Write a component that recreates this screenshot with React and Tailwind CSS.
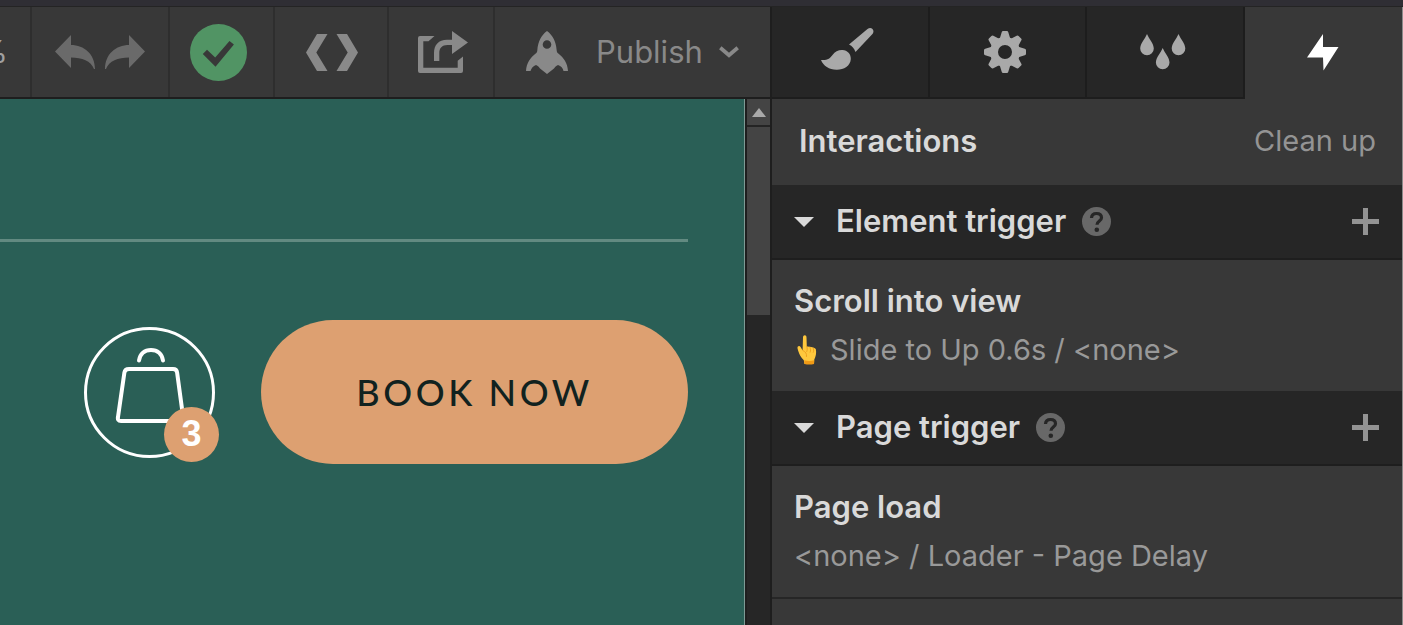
import React from "react";

const GEAR_ANGLES = [0, 45, 90, 135, 180, 225, 270, 315];

function UndoIcon({ className }) {
  return (
    <svg className={className} width="40" height="34" viewBox="0 0 40 34" fill="currentColor" aria-hidden="true">
      <path d="M0 16.500 16 0v10c13 0 24 9 24 24h-1c-3-8-12-11.500-23-11.500V33Z" />
    </svg>
  );
}

function CheckIcon() {
  return (
    <svg width="57" height="57" viewBox="0 0 57 57" aria-hidden="true">
      <circle cx="28.500" cy="28.500" r="28.500" fill="#519464" />
      <path d="m12.800 30 4.200-4.300 8.200 7.800L39.500 17l4.400 3.600L25.500 42.800Z" fill="#383838" />
    </svg>
  );
}

function CodeIcon() {
  return (
    <svg width="52" height="37" viewBox="0 0 52 37" fill="currentColor" aria-hidden="true">
      <path d="M11 0h10.500L10.300 18.500 21.500 37H11L0 18.500Z" />
      <path d="M41 0H30.500l11.200 18.500L30.500 37H41l11-18.500Z" />
    </svg>
  );
}

function ShareIcon() {
  return (
    <svg width="50" height="42" viewBox="0 0 50 42" fill="currentColor" aria-hidden="true">
      <path d="M2 5h14.500l-6 5.300H5.300v26.400h34.400v-7L45 25.500V40a2 2 0 0 1-2 2H2a2 2 0 0 1-2-2V7a2 2 0 0 1 2-2Z" />
      <path d="M34 0l16 11.500L34 23v-9h-4.500c-5.500 0-8.200 3-8.200 8v8H16v-8c0-8 4.500-13.300 13-13.300h5Z" />
    </svg>
  );
}

function RocketIcon() {
  return (
    <svg width="42" height="43" viewBox="0 0 42 43" fill="currentColor" aria-hidden="true">
      <path
        fillRule="evenodd"
        d="M21 0c5.500 4 9 10 9.700 19.500.1 1.300.6 2.200 1.600 3C38 27 41.500 32 42 40h-4.500c-.5-3-2.500-5-5.500-6-2 1-3 2-4 3.500L21 43l-7-5.500c-1-1.500-2-2.500-4-3.500-3 1-4.500 3-5.500 6H0c.5-8 4-13 9.700-17.500 1-.8 1.500-1.700 1.600-3C12 10 15.500 4 21 0Zm0 9.200a4.300 4.300 0 1 0 0 8.600 4.300 4.300 0 0 0 0-8.600Z"
      />
    </svg>
  );
}

function ChevronIcon() {
  return (
    <svg width="20" height="12" viewBox="0 0 20 12" fill="none" stroke="currentColor" strokeWidth="3.800" aria-hidden="true">
      <path d="m1.300 1.800 8.700 7.400 8.700-7.400" />
    </svg>
  );
}

function BrushIcon() {
  return (
    <svg width="54" height="42" viewBox="0 0 54 42" fill="currentColor" aria-hidden="true">
      <path d="M28 16.500 46.500 1c1.800-1.300 3.700-1.300 5 0 1.300 1.400 1.200 3.200.2 4.700L34.500 24c-1.300-3.500-3.300-6-6.500-7.500Z" />
      <path d="M0 32c6.500.5 9-1.500 11.500-5 2.500-3.500 6-5.200 10-5 5 .4 8.500 4 8.300 9C29.500 38 22.500 42 15.500 41.800 8 41.600 2.500 38 0 32Z" />
    </svg>
  );
}

function GearIcon() {
  return (
    <svg width="42" height="42" viewBox="-21 -21 42 42" fill="currentColor" aria-hidden="true">
      <circle r="11" fill="none" stroke="currentColor" strokeWidth="8" />
      {GEAR_ANGLES.map((angle) => (
        <path key={angle} d="M-5.500-12.500-3.300-19.800Q-3-21-1.800-21h3.600Q3-21 3.300-19.800L5.500-12.500Z" transform={`rotate(${angle})`} />
      ))}
    </svg>
  );
}

function DropsIcon() {
  return (
    <svg width="46" height="36" viewBox="0 0 46 36" fill="currentColor" aria-hidden="true">
      {[[7, 0], [22.7, 14], [38.5, 0]].map(([x, y]) => (
        <path key={x} transform={`translate(${x} ${y})`} d="M0 0C2 5 6.800 9.500 6.800 14.500a6.800 6.800 0 0 1-13.600 0C-6.800 9.500-2 5 0 0Z" />
      ))}
    </svg>
  );
}

function BoltIcon() {
  return (
    <svg width="32" height="37" viewBox="0 0 32 37" fill="currentColor" aria-hidden="true">
      <path d="M16 0v13h15.500L16.500 36.500 16 23.500H0Z" />
    </svg>
  );
}

function BagIcon() {
  return (
    <svg width="70" height="76" viewBox="0 0 70 76" fill="none" stroke="currentColor" strokeWidth="4" strokeLinecap="round" strokeLinejoin="round" aria-hidden="true">
      <path d="M24 13.500c1-6.500 5.500-10.500 12-10.500s11 4 12 10.500" />
      <path d="M14 22h44c2.500 0 3.800 1 4.100 3.500l6 44.500c.3 2.500-.8 4-3.500 4H6c-2.700 0-3.500-1.500-3-4l6.400-44.500C9.800 23 11.500 22 14 22Z" />
    </svg>
  );
}

function PointingHandIcon() {
  return (
    <svg width="20" height="30" viewBox="0 0 20 30" role="img" aria-label="Pointing up">
      <path d="M6 2.500C6 1 6.800.3 7.800.3S9.500 1 9.500 2.500l.3 9c4 .4 7.700.8 9 2.500.9 4-.1 8-1.500 10.500L17 29H7.500l-.7-3.800C4 22.500 2 19.500.5 13.300c-.3-2.300 2-3 3.100-1.300l2 3.500Z" fill="#ffc83d" />
      <path d="M7.200 25.300c3.200 1 7 1 10 0L17 29c-3 .8-6.500.8-9.500 0Z" fill="#f09a16" />
      <path d="M9.800 11.500c.6 2 .6 3.500 0 5M13 12.200c.8 2 .8 3.300.2 5M16.200 13c.6 1.500.6 3 .1 4.300M6 15.500c2.500 1.500 4 3 3.500 6" fill="none" stroke="#efa11f" strokeWidth="1" strokeLinecap="round" />
    </svg>
  );
}

function ToolButton({ label, className, children }) {
  return (
    <button type="button" aria-label={label} className={`flex shrink-0 items-center justify-center border-r-2 border-[#2e2e2e] ${className}`}>
      {children}
    </button>
  );
}

function Toolbar() {
  return (
    <div role="toolbar" className="flex h-[92px] border-b-2 border-[#1e1e1e] bg-[#383838] text-[#898989]">
      <div className="flex w-8 shrink-0 items-center justify-end overflow-hidden border-r-2 border-[#2e2e2e] pr-[22px] text-[31px] text-[#a0a0a0]">
        <span>%</span>
      </div>
      <div className="flex w-[138px] shrink-0 items-center justify-center gap-[10px] border-r-2 border-[#2e2e2e] text-[#6a6a6a]">
        <button type="button" aria-label="Undo"><UndoIcon /></button>
        <button type="button" aria-label="Redo"><UndoIcon className="-scale-x-100" /></button>
      </div>
      <ToolButton label="Saved" className="w-[105px] pr-1.5"><CheckIcon /></ToolButton>
      <ToolButton label="Code" className="w-[114px] pl-0.5"><CodeIcon /></ToolButton>
      <ToolButton label="Share" className="w-[106px] pl-1"><ShareIcon /></ToolButton>
      <button type="button" className="flex grow items-center pl-[31px] text-[31px]">
        <RocketIcon />
        <span className="ml-7 mr-4">Publish</span>
        <ChevronIcon />
      </button>
    </div>
  );
}

function Canvas() {
  return (
    <div className="flex grow">
      <main className="grow border-r border-[#7d9a94] bg-[#2a5f56] pr-14 pt-[140px]">
        <hr className="h-[3px] border-0 bg-[#628a81]" />
        <div className="mt-[78px] flex items-center justify-end gap-[46px]">
          <button type="button" aria-label="Cart, 3 items" className="relative flex size-[131px] items-start justify-center rounded-full border-[3px] border-white pt-[17px] text-white">
            <BagIcon />
            <span className="absolute -bottom-[7px] -right-[7px] flex size-[55px] items-center justify-center rounded-full bg-[#dda071] font-['Liberation_Sans',sans-serif] text-[36px] font-bold">3</span>
          </button>
          <button type="button" className="h-36 w-[427px] rounded-full bg-[#dda071] font-[Lato,sans-serif] text-[36px] font-medium tracking-widest text-[#11221f]">
            BOOK NOW
          </button>
        </div>
      </main>
      <div className="flex w-[25px] flex-col border-l-2 border-[#1e1e1e] bg-[#262626]">
        <button type="button" aria-label="Scroll up" className="flex h-7 items-center justify-center border-b-2 border-[#242424] bg-[#444] text-[#a9a9a9]">
          <svg width="14" height="9" viewBox="0 0 14 9" fill="currentColor" aria-hidden="true"><path d="M7 0l7 9H0Z" /></svg>
        </button>
        <div className="h-[188px] bg-[#444]" />
      </div>
    </div>
  );
}

const TABS = [
  { label: "Style", Icon: BrushIcon, pad: "pb-1.5" },
  { label: "Settings", Icon: GearIcon, pad: "" },
  { label: "Style manager", Icon: DropsIcon, pad: "" },
];

function PanelTabs() {
  return (
    <div role="tablist" className="grid h-[92px] grid-cols-4">
      {TABS.map(({ label, Icon, pad }) => (
        <button key={label} type="button" role="tab" aria-label={label} aria-selected="false" className={`flex items-center justify-center border-b-2 border-r-2 border-[#1d1d1d] bg-[#262626] pr-1 text-[#a9a9a9] ${pad}`}>
          <Icon />
        </button>
      ))}
      <button type="button" role="tab" aria-label="Interactions" aria-selected="true" className="flex items-center justify-center pb-0.5 text-white">
        <BoltIcon />
      </button>
    </div>
  );
}

function TriggerSection({ title, name, children }) {
  return (
    <section>
      <div className="flex h-[75px] items-center border-b-2 border-[#1e1e1e] bg-[#262626] pl-[22px] pr-[23px]">
        <button type="button" aria-expanded="true" className="flex items-center gap-[22px] text-[31px] font-semibold text-[#d9d9d9]">
          <svg width="20" height="10" viewBox="0 0 20 10" fill="currentColor" aria-hidden="true"><path d="M0 0h20L10 10Z" /></svg>
          {title}
        </button>
        <button type="button" aria-label={`About ${title}`} className="ml-4">
          <svg width="29" height="29" viewBox="0 0 29 29" fill="none" aria-hidden="true">
            <circle cx="14.500" cy="14.500" r="14.500" fill="#686868" />
            <path d="M9.500 11c.2-3 2.200-4.500 5-4.500 3 0 5 1.600 5 4.200 0 3.300-4.500 3.300-4.500 7" stroke="#262626" strokeWidth="3.200" />
            <circle cx="14.800" cy="22.800" r="2.300" fill="#262626" />
          </svg>
        </button>
        <button type="button" aria-label={`Add ${title}`} className="ml-auto text-[#939393]">
          <svg width="27" height="27" viewBox="0 0 27 27" fill="none" stroke="currentColor" strokeWidth="5" aria-hidden="true"><path d="M13.500 0v27M0 13.500h27" /></svg>
        </button>
      </div>
      <div className="px-[22px] pb-[17px] pt-[17px]">
        <h3 className="text-[31px] leading-[48px] font-semibold text-[#d9d9d9]">{name}</h3>
        <p className="flex items-center text-[29px] leading-[49px] text-[#999]">{children}</p>
      </div>
    </section>
  );
}

function InteractionsPanel() {
  return (
    <aside className="flex w-[633px] shrink-0 flex-col border-l-2 border-r border-l-[#1e1e1e] border-r-[#8a8a8a] bg-[#383838]">
      <PanelTabs />
      <div className="flex h-[86px] items-center justify-between pb-0.5 pl-[27px] pr-[26px]">
        <h2 className="text-[31px] font-semibold text-[#d9d9d9]">Interactions</h2>
        <button type="button" className="text-[29px] text-[#949494]">Clean up</button>
      </div>
      <TriggerSection title="Element trigger" name="Scroll into view">
        <span className="ml-[3px] mr-[13px]"><PointingHandIcon /></span>
        Slide to Up 0.6s / &lt;none&gt;
      </TriggerSection>
      <TriggerSection title="Page trigger" name="Page load">&lt;none&gt; / Loader - Page Delay</TriggerSection>
      <div className="grow border-t-2 border-[#262626]" />
    </aside>
  );
}

export default function App() {
  return (
    <div className="flex min-h-screen flex-col bg-[#383838] font-[Inter,sans-serif]">
      <div className="h-[7px] border-b border-[#242424] bg-[#2f2e34]" />
      <div className="flex grow">
        <div className="flex min-w-0 grow flex-col">
          <Toolbar />
          <Canvas />
        </div>
        <InteractionsPanel />
      </div>
    </div>
  );
}
